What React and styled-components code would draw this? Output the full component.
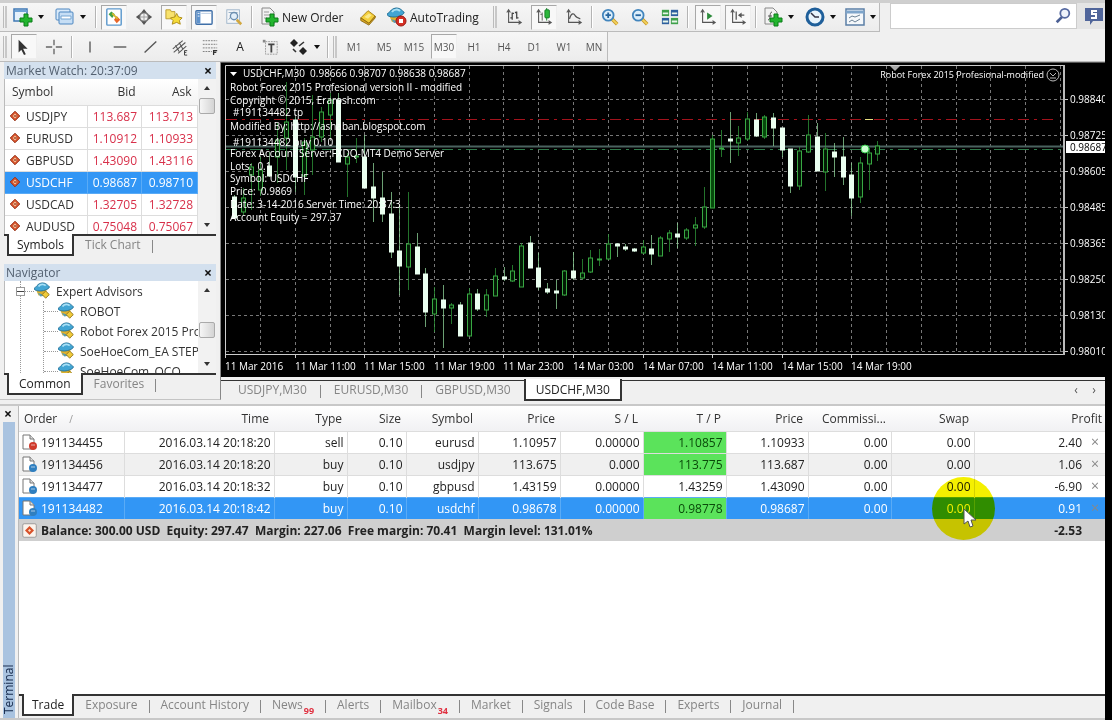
import React from 'react'
import styled, { createGlobalStyle, css } from 'styled-components'

const GlobalStyle = createGlobalStyle`
    * { box-sizing: border-box; }
    body {
        margin: 0;
        background: black;
        font-family: "Open Sans", "Noto Sans", sans-serif;
        font-size: 12px;
        color: #222;
    }
    button, input { font: inherit; color: inherit; }
    svg { display: block; flex: none; }
`

const Page = styled.div`
    display: flex;
    flex-direction: column;
    min-height: 100vh;
    margin-right: 7px;
    background: #f0f0f0;
    overflow: hidden;
`

/* ---------- toolbars ---------- */

const TopBar = styled.div`
    display: flex;
    height: 32px;
    border-top: 3px solid #cfcfcf;
`

const LowBar = styled.div`
    display: flex;
    height: 29px;
`

const Tools = styled.div`
    display: flex;
    align-items: center;
    gap: 4px;
    height: 29px;
    padding-left: 3px;
    border-right: 1px solid #bbb;
    border-bottom: ${p => (p.$line ? '1px solid #bbb' : 'none')};
    background: linear-gradient(#f6f6f6, #ececec);
`

const Handle = styled.span`
    width: 4px;
    height: 22px;
    border-left: 1px solid #bbb;
    border-right: 2px solid #c8c8c8;
`

const Sep = styled.span`
    width: 2px;
    height: 22px;
    margin-right: ${p => p.$after || 0}px;
    border-left: 1px solid #b4b4b4;
    border-right: 1px solid white;
`

const Tool = styled.button`
    display: flex;
    align-items: center;
    justify-content: ${p => (p.$wide ? 'flex-start' : 'center')};
    gap: 3px;
    width: ${p => p.$wide || 26}px;
    height: 25px;
    padding: 0 ${p => (p.$wide ? 1 : 0)}px;
    border: 1px solid transparent;
    background: none;
    white-space: nowrap;
    ${p => p.$on && css`
        background: #f8f8f8;
        border-color: #a8a8a8 #eee #eee #a8a8a8;
    `}
`

const Period = styled(Tool)`
    font-size: 10px;
    color: #555;
`

const Caret = styled.span`
    margin-left: ${p => p.$space}px;
    border: 3px solid transparent;
    border-top: 4px solid #111;
    border-bottom: 0;
`

const Search = styled.label`
    display: flex;
    flex: 1;
    align-items: center;
    height: 26px;
    margin-left: 10px;
    padding-right: 4px;
    border: 1px solid #ccc;
    background: white;
`

const SearchInput = styled.input`
    flex: 1;
    min-width: 0;
    border: 0;
    outline: 0;
    background: none;
`

const Chat = styled.button`
    width: 28px;
    height: 26px;
    padding: 0 0 0 7px;
    border: 0;
    background: #e4e4e4;
`

/* ---------- side panels ---------- */

const Middle = styled.div`
    display: grid;
    grid-template-columns: 221px minmax(0, 1fr);
    border-top: 1px solid #bbb;
`

const Side = styled.div`
    display: flex;
    flex-direction: column;
    gap: 8px;
    padding: 0 4px 4px 4px;
    border-right: 1px solid #888;
    border-bottom: 1px solid #c4c4c4;
    margin-bottom: 4px;
`

const Panel = styled.section`
    display: flex;
    flex-direction: column;
`

const PanelTitle = styled.header`
    display: flex;
    align-items: center;
    justify-content: space-between;
    height: 17px;
    padding-left: 2px;
    background: #d3e0ee;
    color: #536070;
`

const Close = styled.button`
    width: 16px;
    height: 16px;
    padding: 0;
    border: 0;
    background: none;
    color: #111;
    font-size: 14px;
    font-weight: bold;
    line-height: 14px;
`

const PanelBody = styled.div`
    display: grid;
    grid-template-columns: minmax(0, 1fr) 18px;
    height: ${p => p.$height}px;
    overflow: hidden;
    background: white;
    border-left: 1px solid #bbb;
`

const Clip = styled.div`
    min-width: 0;
    overflow: hidden;
`

const ScrollBar = styled.div`
    display: flex;
    flex-direction: column;
    background: #f2f2f2;
`

const ScrollButton = styled.button`
    display: grid;
    place-items: center;
    height: 18px;
    padding: 0;
    border: 0;
    background: none;
`

const Arrow = styled.span`
    border: 3px solid transparent;
    ${p => (p.$up ? 'border-bottom: 4px solid #333; border-top: 0;' : 'border-top: 4px solid #333; border-bottom: 0;')}
`

const Track = styled.div`
    flex: 1;
    padding-top: ${p => p.$top}px;
`

const Thumb = styled.div`
    height: 16px;
    margin: 0 1px;
    border: 1px solid #aaa;
    border-radius: 2px;
    background: linear-gradient(90deg, #f6f6f6, #d4d4d4);
`

const Quotes = styled.table`
    width: 100%;
    table-layout: fixed;
    border-collapse: collapse;

    th {
        height: 26px;
        padding: 0 6px;
        font-weight: normal;
        text-align: right;
        color: #333;
        background: linear-gradient(white, #f3f3f3);
        border-bottom: 1px solid #ddd;
    }
    th:first-child { text-align: left; padding-left: 7px; }
    td {
        height: 22px;
        padding: 0 4px;
        text-align: right;
        color: #d8304a;
        border-right: 1px solid #ddd;
        border-bottom: 1px solid #ddd;
    }
    td:first-child { padding-left: 3px; }
`

const QuoteRow = styled.tr`
    ${p => p.$on && css`
        background: #3296f5;
        && td { color: white; border-color: #5aabf6; }
    `}
`

const SymbolCell = styled.div`
    display: flex;
    align-items: center;
    gap: 5px;
    padding-left: 1px;
    color: ${p => (p.$on ? 'white' : '#333')};
`

const Tabs = styled.nav`
    display: flex;
    align-items: flex-start;
    height: ${p => p.$height || 22}px;
    padding-left: ${p => p.$left || 3}px;
    border-top: 2px solid #333;
    background: #f0f0f0;
`

const Tab = styled.button`
    display: flex;
    justify-content: center;
    height: 22px;
    padding: 0 ${p => p.$pad || 11}px;
    border: 0;
    background: none;
    color: #858585;
    line-height: 18px;
    white-space: nowrap;
    ${p => p.$on && css`
        margin-top: -2px;
        padding: 2px ${p.$pad || 8}px 0;
        border: 2px solid #333;
        border-top: 0;
        background: white;
        color: #222;
    `}
`

const TabLine = styled.span`
    width: 1px;
    height: 13px;
    margin-top: 4px;
    background: #888;
`

const Count = styled.sub`
    align-self: flex-end;
    margin-left: 1px;
    color: #e03040;
    font-size: 9px;
    font-weight: bold;
    line-height: 14px;
`

/* ---------- navigator tree ---------- */

const TreeList = styled.ul`
    margin: 0 0 0 15px;
    padding: 0;
    list-style: none;
    border-left: 1px dotted #999;
    white-space: nowrap;
`

const TreeItem = styled.li`
    display: flex;
    align-items: center;
    gap: 4px;
    height: 20px;
    color: #333;
`

const Branch = styled.ul`
    margin: 0 0 0 22px;
    padding: 0;
    list-style: none;
    border-left: 1px dotted #999;
`

const Dash = styled.span`
    flex: none;
    width: ${p => p.$w}px;
    margin-right: -4px;
    border-top: 1px dotted #999;
`

const Expander = styled.button`
    flex: none;
    width: 9px;
    height: 9px;
    margin: 0 -5px;
    padding: 0;
    border: 1px solid #999;
    background: linear-gradient(white 3px, #444 3px, #444 4px, white 4px);
`

/* ---------- chart ---------- */

const ChartColumn = styled.div`
    display: flex;
    flex-direction: column;
`

const ChartArea = styled.div`
    border-top: 1px solid #555;
    background: black;

    svg { width: 100%; height: auto; }
`

const ChartTabs = styled(Tabs)`
    margin-top: 3px;
    padding-right: 2px;
    border-top: 1px solid #333;
`

const Nudge = styled.button`
    width: 18px;
    height: 18px;
    padding: 0;
    border: 0;
    background: none;
    color: #555;
    line-height: 16px;
    margin-left: ${p => (p.$first ? 'auto' : 0)};
`

/* ---------- terminal ---------- */

const Terminal = styled.section`
    display: grid;
    grid-template-columns: 18px minmax(0, 1fr);
    flex: 1;
    border-top: 2px solid #c8c8c8;
    border-bottom: 2px solid #c8c8c8;
`

const Strip = styled.aside`
    display: flex;
    flex-direction: column;
    padding-right: 3px;
`

const StripName = styled.div`
    flex: 1;
    margin-left: 3px;
    padding-top: 4px;
    writing-mode: vertical-rl;
    transform: rotate(180deg);
    background: #a9c3e0;
    color: #14284a;
    line-height: 12px;
`

const TerminalBody = styled.div`
    display: flex;
    flex-direction: column;
    justify-content: space-between;
    background: white;
    border-left: 1px solid #bbb;
`

const Orders = styled.table`
    width: 100%;
    table-layout: fixed;
    border-collapse: collapse;

    th {
        height: 25px;
        padding: 0 5px;
        font-weight: normal;
        text-align: right;
        color: #333;
        background: linear-gradient(white, #f1f1f3);
        white-space: nowrap;
    }
    th:first-child { text-align: left; }
    th:last-child { padding-right: 3px; }
    td {
        height: 22px;
        padding: 0 3px;
        text-align: right;
        border-right: 1px solid #ddd;
        border-top: 1px solid #ddd;
        white-space: nowrap;
    }
    td:nth-last-child(-n + 2) { border-right: 0; }
`

const OrderRow = styled.tr`
    background: ${p => (p.$alt ? '#f0f0f0' : 'white')};
    ${p => p.$on && css`
        background: #3296f5;
        color: white;
        && td { border-color: #5aabf6; }
    `}
`

const OrderId = styled.div`
    display: flex;
    align-items: center;
    gap: ${p => p.$gap || 2}px;
`

const Target = styled.td`
    background: ${p => (p.$hit ? '#5be35b' : 'transparent')};
    color: ${p => (p.$hit ? '#0a4a0a' : 'inherit')};
`

const SortMark = styled.span`
    margin-left: 12px;
    color: #999;
    font-size: 10px;
`

const SmallClose = styled.button`
    display: block;
    margin: 0 auto;
    padding: 0;
    border: 0;
    background: none;
    color: #888;
    font-size: 14px;
    line-height: 16px;
`

const Summary = styled.tr`
    background: #cfcfcf;
    font-weight: bold;
    && td { border: 0; }
    && td:first-child { text-align: left; padding-left: 3px; }
`

const SwapCell = styled.td`
    position: relative;
`

const Halo = styled.span`
    position: absolute;
    left: 40px;
    top: -21px;
    width: 63px;
    height: 63px;
    border-radius: 50%;
    background: #f4f000;
    mix-blend-mode: multiply;
`

const Pointer = styled.svg`
    position: absolute;
    left: 71px;
    top: 10px;
`

/* ---------- icons ---------- */

const Plus = ({ x, y }) => (
    <path transform={`translate(${x} ${y})`} d="M4 0h4v4h4v4H8v4H4V8H0V4h4z" fill="#22b52e" stroke="#0b7d18" />
)

const Axes = () => <path d="M4 3v13h13M2 5l2-3 2 3M15 14l3 2-3 2" fill="none" stroke="#555" strokeWidth="1.2" />

const Lens = ({ plus }) => (
    <>
        <path d="M12 12l6 6" stroke="#c99a2c" strokeWidth="4" />
        <path d="M12 12l6 6" stroke="#f3d35c" strokeWidth="2" />
        <circle cx="8" cy="8" r="6" fill="#dceefb" stroke="#4285bd" strokeWidth="2" />
        <path d={plus ? 'M5 8h6M8 5v6' : 'M5 8h6'} stroke="#2666a0" strokeWidth="2" />
    </>
)

const Hat = () => (
    <>
        <path d="M2 8l3 7 8-1 1-6z" fill="#dfb22c" />
        <path d="M4 12l3 4 6-1" fill="#5a9cb0" />
        <path d="M0 7c3-1 3-5 9-6 5 0 6 3 8 4 1 2-5 5-10 5-4 0-7-1-7-3z" fill="#42a5d3" stroke="#216f96" />
        <path d="M5 5c2-3 6-3 8-1" stroke="#a8e0f6" strokeWidth="2" fill="none" />
    </>
)

const drawings = {
    newChart: <><rect x="1" y="2" width="13" height="12" fill="#e5f1fb" stroke="#3f78b5" strokeWidth="1.5" /><path d="M2 4h12" stroke="#6da2d6" strokeWidth="2" /><Plus x={7} y={7} /></>,
    windows: <><rect x="1" y="2" width="14" height="11" rx="1" fill="#d9eafa" stroke="#4c86c0" /><rect x="4" y="5" width="14" height="12" rx="1" fill="#c6def5" stroke="#4c86c0" /><path d="M6 9h10v3H6z" fill="white" stroke="#75a5d2" /></>,
    market: <><rect x="2" y="1" width="16" height="18" rx="1" fill="white" stroke="#5c98cc" strokeWidth="1.6" /><path d="M7 4l4 3-3 4-4-4z" fill="#43a047" /><path d="M13 9l4 4-4 4-3-4z" fill="#e8662a" /><path d="M8 6l6 6" stroke="#d6b92f" strokeWidth="2" /></>,
    data: <><circle cx="10" cy="10" r="5" fill="none" stroke="#777" strokeWidth="2" /><path d="M10 1l3 4H7zM10 19l3-4H7zM1 10l4-3v6zM19 10l-4-3v6z" fill="#555" /><path d="M10 6v8M6 10h8" stroke="#999" /></>,
    navigator: <><path d="M1 2h5l1 2h4v8H1z" fill="#f8e26d" stroke="#b9982a" /><path d="M13 6l2 4 4 1-3 3 1 4-4-2-5 2 1-4-3-3 5-1z" fill="#f6dc3a" stroke="#a98814" /></>,
    terminal: <><rect x="1" y="3" width="18" height="15" rx="1" fill="white" stroke="#3f6fa8" strokeWidth="1.6" /><path d="M2 4h4v13H2z" fill="#5f93cd" /><path d="M7 6h11" stroke="#b7cbe2" /><path d="M3 6h2M3 9h2" stroke="white" /></>,
    tester: <><rect x="2" y="2" width="14" height="15" fill="#f4f6f8" stroke="#9cb3c9" /><path d="M4 5h10M4 13l3-4 2 3" stroke="#8ca8c0" fill="none" /><path d="M13 13l5 5" stroke="#d2a73e" strokeWidth="3" /><circle cx="10" cy="9" r="4" fill="#e2effa" stroke="#6d8fb0" strokeWidth="1.5" /></>,
    order: <><path d="M3 1h8l4 4v12H3z" fill="#f2f2f2" stroke="#888" /><path d="M5 5h5M5 8h6M5 11h3" stroke="#999" /><Plus x={7} y={7} /></>,
    book: <><path d="M2 11l8-8 8 6-7 8z" fill="#f4cf3c" stroke="#a47c10" /><path d="M2 11v3l9 5 7-8V9l-7 8z" fill="#d9a520" stroke="#8b680c" /><path d="M6 10l5-4 3 2-4 4z" fill="#fae98c" /></>,
    auto: <><Hat /><circle cx="14" cy="14" r="5" fill="#d42f24" stroke="#9d1710" /><rect x="12" y="12" width="4" height="4" fill="white" /></>,
    bars: <><Axes /><path d="M8 5v8M8 6h2M6 11h2M13 4v8M11 5h2M13 11h2" stroke="#444" strokeWidth="1.4" /></>,
    candles: <><Axes /><path d="M8 5v9M6 7h2" stroke="#555" /><path d="M13 0v14" stroke="#117a22" /><rect x="11" y="2" width="5" height="9" rx="1" fill="#2cb73c" stroke="#117a22" /></>,
    line: <><Axes /><path d="M5 12c2-7 5-6 6-4s3 3 6 4" fill="none" stroke="#555" strokeWidth="1.4" /></>,
    zoomIn: <Lens plus />,
    zoomOut: <Lens />,
    tile: <><rect x="1" y="2" width="8" height="7" fill="#3ea04a" /><rect x="11" y="2" width="8" height="7" fill="#2d5f9e" /><rect x="1" y="11" width="8" height="7" fill="#2d5f9e" /><rect x="11" y="11" width="8" height="7" fill="#3ea04a" /><path d="M2 6h6M12 6h6M2 15h6M12 15h6" stroke="#e8f6ea" strokeWidth="2" /></>,
    scroll: <><Axes /><path d="M9 5l6 4-6 4z" fill="#2b8a3a" /></>,
    shift: <><Axes /><path d="M8 4v9M17 8h-6" stroke="#555" strokeWidth="1.4" /><path d="M10 8l4-3v6z" fill="#555" /></>,
    indicators: <><path d="M2 1h8l4 4v12H2z" fill="#f2f2f2" stroke="#888" /><path d="M5 13c3 0 1-8 4-8M5 9h4" stroke="#555" fill="none" /><Plus x={7} y={7} /></>,
    clock: <><circle cx="10" cy="10" r="8" fill="#e8f4fc" stroke="#1f5f9a" strokeWidth="3" /><path d="M6 6l4 4h4" fill="none" stroke="#334" strokeWidth="1.5" /></>,
    template: <><rect x="1" y="2" width="18" height="16" fill="#f5f8fb" stroke="#5b7fa6" strokeWidth="1.5" /><path d="M1 5h18" stroke="#7ea5cb" strokeWidth="3" /><path d="M4 11l3-2 3 1 5-2M4 15l3-2 3 2 5-3" fill="none" stroke="#6c8296" /></>,
    cursor: <path d="M4 2v14l3-3 3 6 2-1-3-6h5z" fill="#333" />,
    cross: <path d="M10 2v6M10 12v6M1 10h7M12 10h7" stroke="#666" strokeWidth="1.5" />,
    vline: <path d="M10 4v12" stroke="#555" strokeWidth="1.5" />,
    hline: <path d="M3 10h14" stroke="#555" strokeWidth="1.5" />,
    trend: <path d="M4 16L17 4" stroke="#555" strokeWidth="1.5" />,
    channel: <><path d="M2 12L13 3M3 16L16 5M8 17l9-8M5 8l4 7M9 5l4 7" stroke="#555" strokeWidth="1.2" /><path d="M18 14h-3v5h3M15 16h2" stroke="#333" fill="none" /></>,
    fibo: <><path d="M2 3h16M2 7h16M2 11h16M2 15h10" stroke="#777" strokeDasharray="2 1" /><path d="M14 19v-5h4M14 16h3" stroke="#333" fill="none" strokeWidth="1.4" /></>,
    label: <><rect x="5" y="4" width="13" height="14" fill="#eee" stroke="#999" strokeDasharray="2 1" /><path d="M8 7h7M11.500 7v9" stroke="#444" strokeWidth="2" /><path d="M2 2h3v3H2z" fill="#888" /></>,
    arrows: <><path d="M5 2l4 4-4 4-4-4zM14 10l4 4-4 4-4-4z" fill="#222" /><path d="M4 12l3 3M10 9l5-4" stroke="#333" strokeWidth="1.6" fill="none" /></>,
    find: <><path d="M3 17l6-6" stroke="#4a5f94" strokeWidth="3" /><circle cx="12" cy="7" r="5" fill="#eef3fb" stroke="#5468a0" strokeWidth="2" /></>,
    expert: <><Hat /><path d="M13 10l4 4-4 4-4-4z" fill="#f0cb3a" stroke="#8e7017" /></>,
    diamond: <><path d="M10 2l8 8-8 8-8-8z" fill="#d8512a" stroke="#8f2d12" strokeWidth="1.5" /><path d="M10 6l4 4-4 4-4-4z" fill="#f7c9a0" /><path d="M8 10h5" stroke="#8f2d12" strokeWidth="2" /></>,
    balance: <><rect x="1" y="1" width="18" height="18" rx="2" fill="#fbf3ec" stroke="#888" /><path d="M10 4l6 6-6 6-6-6z" fill="#d8512a" /><path d="M10 8l2 2-2 2-2-2z" fill="#fbe0c4" /></>,
}

const Icon = ({ name, size = 18 }) => (
    <svg width={size} height={size} viewBox="0 0 20 20" aria-hidden="true">{drawings[name]}</svg>
)

const Paper = ({ color }) => (
    <svg width="17" height="17" viewBox="0 0 17 17" aria-hidden="true">
        <path d="M1 1h7l4 4v10H1z" fill="white" stroke="#777" />
        <path d="M8 1v4h4" fill="#ddd" stroke="#777" />
        <circle cx="11" cy="12" r="4" fill={color} />
        <path d="M9 11h4" stroke="white" strokeOpacity="0.6" />
    </svg>
)

/* ---------- data ---------- */

const quotes = [
    ['USDJPY', '113.687', '113.713'],
    ['EURUSD', '1.10912', '1.10933'],
    ['GBPUSD', '1.43090', '1.43116'],
    ['USDCHF', '0.98687', '0.98710'],
    ['USDCAD', '1.32705', '1.32728'],
    ['AUDUSD', '0.75048', '0.75067'],
]

const experts = ['ROBOT', 'Robot Forex 2015 Profesional', 'SoeHoeCom_EA STEP', 'SoeHoeCom_OCO']

const orders = [
    ['191134455', '2016.03.14 20:18:20', 'sell', '0.10', 'eurusd', '1.10957', '0.00000', '1.10857', '1.10933', '0.00', '0.00', '2.40'],
    ['191134456', '2016.03.14 20:18:20', 'buy', '0.10', 'usdjpy', '113.675', '0.000', '113.775', '113.687', '0.00', '0.00', '1.06'],
    ['191134477', '2016.03.14 20:18:32', 'buy', '0.10', 'gbpusd', '1.43159', '0.00000', '1.43259', '1.43090', '0.00', '0.00', '-6.90'],
    ['191134482', '2016.03.14 20:18:42', 'buy', '0.10', 'usdchf', '0.98678', '0.00000', '0.98778', '0.98687', '0.00', '0.00', '0.91'],
]

const headings = ['Time', 'Type', 'Size', 'Symbol', 'Price', 'S / L', 'T / P', 'Price', 'Commissi...', 'Swap']
const columns = [105, 150, 73, 59, 72, 82, 83, 83, 82, 83, 83]

// kind, high, body top, body bottom, low. w = bear, g = bull, f = filled bull
const candles = [
    ['w', 195, 197, 218, 218], ['g', 188, 198, 212, 215], ['g', 163, 167, 175, 210], ['g', 157, 170, 190, 196],
    ['w', 152, 166, 176, 177], ['g', 123, 140, 157, 183], ['g', 82, 122, 138, 170], ['w', 117, 120, 177, 192],
    ['g', 138, 142, 176, 195], ['g', 95, 137, 150, 175], ['g', 107, 112, 137, 142], ['g', 93, 100, 115, 138],
    ['w', 93, 100, 162, 162], ['g', 153, 157, 164, 197], ['g', 138, 156, 157, 163], ['w', 135, 157, 188, 188],
    ['w', 163, 187, 198, 222], ['w', 172, 198, 214, 222], ['w', 192, 214, 252, 258], ['w', 205, 251, 266, 295],
    ['g', 192, 244, 267, 290], ['w', 233, 247, 274, 274], ['w', 268, 274, 312, 327], ['g', 287, 299, 314, 332],
    ['w', 285, 300, 308, 348], ['g', 303, 305, 308, 324], ['w', 302, 305, 336, 336], ['g', 288, 294, 336, 336],
    ['w', 289, 294, 309, 311], ['g', 289, 295, 310, 317], ['g', 268, 276, 296, 296], ['w', 267, 277, 279, 281],
    ['g', 265, 271, 281, 282], ['g', 243, 246, 287, 287], ['w', 236, 243, 268, 268], ['w', 253, 268, 287, 290],
    ['w', 283, 289, 292, 294], ['w', 280, 291, 293, 309], ['g', 270, 271, 295, 296], ['w', 252, 271, 278, 280],
    ['g', 259, 273, 278, 280], ['g', 250, 258, 272, 273], ['g', 249, 259, 260, 266], ['g', 234, 244, 259, 260],
    ['w', 243, 244, 246, 257], ['w', 244, 247, 249, 251], ['w', 248, 249, 251, 252], ['g', 240, 247, 253, 254],
    ['w', 235, 249, 254, 265], ['g', 236, 238, 256, 256], ['g', 230, 233, 239, 252], ['w', 223, 234, 237, 248],
    ['g', 228, 230, 238, 240], ['g', 217, 225, 228, 246], ['g', 187, 207, 227, 229], ['f', 135, 139, 208, 208],
    ['g', 130, 148, 149, 157], ['w', 112, 139, 141, 163], ['g', 126, 138, 143, 156], ['g', 112, 119, 139, 141],
    ['w', 113, 120, 136, 137], ['f', 115, 117, 137, 139], ['w', 113, 118, 128, 146], ['w', 128, 128, 150, 157],
    ['w', 149, 149, 186, 193], ['g', 147, 151, 186, 190], ['g', 115, 135, 152, 153], ['w', 123, 137, 171, 171],
    ['g', 133, 149, 172, 191], ['w', 143, 152, 157, 177], ['w', 137, 157, 177, 185], ['w', 163, 175, 198, 216],
    ['g', 157, 163, 197, 203], ['g', 148, 153, 164, 190], ['g', 141, 146, 154, 161],
]

const comments = [
    [243, 77, 'USDCHF,M30  0.98666 0.98707 0.98638 0.98687'],
    [230, 91, 'Robot Forex 2015 Profesional version II - modified'],
    [230, 104, 'Copyright © 2015, Erarosh.com'],
    [233, 116, '#191134482 tp'],
    [230, 130, 'Modified By: http://ashaban.blogspot.com'],
    [233, 146, '#191134482 buy 0.10'],
    [230, 157, 'Forex Account Server:FXDQ-MT4 Demo Server'],
    [230, 170, 'Lots:  0.1'],
    [230, 182, 'Symbol: USDCHF'],
    [230, 195, 'Price:  0.9869'],
    [230, 208, 'Date: 3-14-2016 Server Time: 20:37:3'],
    [230, 221, 'Account Equity = 297.37'],
]

const prices = ['0.98840', '0.98725', '0.98605', '0.98485', '0.98365', '0.98250', '0.98130', '0.98010']
const times = ['11 Mar 2016', '11 Mar 11:00', '11 Mar 15:00', '11 Mar 19:00', '11 Mar 23:00', '14 Mar 03:00', '14 Mar 07:00', '14 Mar 11:00', '14 Mar 15:00', '14 Mar 19:00']

function Candle({ index, kind, high, top, bottom, low }) {
    const x = Math.round(234 + index * 8.695)
    const stroke = kind === 'w' ? '#8fd69a' : '#2f9a3a'
    const fill = { w: '#eafff0', g: '#021a04', f: '#064a0c' }[kind]
    return (
        <g>
            <path d={`M${x + 0.5} ${high}V${low}`} stroke={stroke} strokeOpacity="0.75" />
            <rect x={x - 1.5} y={top} width="4" height={Math.max(bottom - top, 1)} fill={fill} stroke={kind === 'w' ? '#eafff0' : '#38a843'} />
        </g>
    )
}

function Chart() {
    return (
        <svg viewBox="221 63 884 314" fontSize="10" fill="white" role="img" aria-label="USDCHF M30 chart">
            <g stroke="#777" strokeDasharray="3 3">
                {Array.from({ length: 24 }, (_, i) => Math.round(260 + i * 34.78) + 0.5).map(x => (
                    <path key={x} d={`M${x} 66V354`} />
                ))}
                {prices.map((p, i) => <path key={p} d={`M226 ${99.5 + i * 36}H1063`} />)}
            </g>
            <path d="M226 119.500H1057" stroke="#a3121c" strokeDasharray="11 5 3 5" />
            <path d="M226 146.500H1063" stroke="#4a625f" strokeWidth="2" />
            <path d="M226 149.500H1063" stroke="#2f7a4a" strokeDasharray="11 5 3 5" />
            {candles.map(([kind, high, top, bottom, low], i) => (
                <Candle key={i} index={i} kind={kind} high={high} top={top} bottom={bottom} low={low} />
            ))}
            <circle cx="865" cy="149" r="4" fill="#c9ffd0" stroke="#32c848" />
            <path d="M865 119.500h8" stroke="#e8e080" />
            <path d="M225.500 355V65.500H1064M225 354.500H1064" stroke="#ccc" fill="none" />
            <path d="M1064 65V355" stroke="#bbb" strokeWidth="2" />
            <path d="M890 66h10l-5 5z" fill="#aaa" />
            <path d="M230 72h7l-3.500 4z" />
            {comments.map(([x, y, text]) => (
                <text key={y} x={x} y={y} xmlSpace="preserve">{text}</text>
            ))}
            <text x="1044" y="78" fontSize="9" textAnchor="end">Robot Forex 2015 Profesional-modified</text>
            <circle cx="1053" cy="75" r="6" fill="none" stroke="#bbb" />
            <path d="M1050 73l3 3 3-3M1050 78h6" stroke="#bbb" fill="none" />
            {prices.map((p, i) => (
                <g key={p}>
                    <path d={`M1065 ${99.5 + i * 36}h3`} stroke="#ccc" />
                    <text x="1070" y={103 + i * 36}>{p}</text>
                </g>
            ))}
            <rect x="1066" y="141" width="39" height="12" />
            <text x="1070" y="151" fill="black">0.98687</text>
            {times.map((t, i) => (
                <g key={t}>
                    <path d={`M${Math.round(225 + i * 69.6) + 0.5} 354v4`} stroke="#ccc" />
                    <text x={Math.round(225 + i * 69.6)} y="370">{t}</text>
                </g>
            ))}
        </svg>
    )
}

const IconTool = ({ name, on }) => <Tool $on={on} aria-label={name}><Icon name={name} /></Tool>
const MenuTool = ({ name, width = 38, space = 2 }) => (
    <Tool $wide={width} aria-label={name}><Icon name={name} size={20} /><Caret $space={space} /></Tool>
)

function Toolbars() {
    return (
        <>
            <TopBar>
                <Tools $line>
                    <Handle />
                    <MenuTool name="newChart" />
                    <MenuTool name="windows" />
                    <Sep />
                    <IconTool name="market" on />
                    <IconTool name="data" />
                    <IconTool name="navigator" on />
                    <IconTool name="terminal" on />
                    <IconTool name="tester" />
                    <Sep />
                    <Tool $wide={94}><Icon name="order" size={20} />New Order</Tool>
                    <IconTool name="book" />
                    <Tool $wide={104}><Icon name="auto" size={20} />AutoTrading</Tool>
                    <Handle />
                    <IconTool name="bars" />
                    <IconTool name="candles" on />
                    <IconTool name="line" />
                    <Sep />
                    <IconTool name="zoomIn" />
                    <IconTool name="zoomOut" />
                    <IconTool name="tile" />
                    <Sep $after={2} />
                    <IconTool name="scroll" on />
                    <IconTool name="shift" on />
                    <Sep />
                    <MenuTool name="indicators" />
                    <MenuTool name="clock" width={36} />
                    <MenuTool name="template" width={36} />
                </Tools>
                <Search>
                    <SearchInput type="search" aria-label="Search" />
                    <Icon name="find" />
                </Search>
                <Chat aria-label="Chat">
                    <svg width="20" height="20" viewBox="0 0 20 20">
                        <path d="M1 2h18v13H9l-3 4v-4H1z" fill="#50659a" />
                        <path d="M13 5H8v3h4v4H7" fill="none" stroke="white" strokeWidth="2" />
                    </svg>
                </Chat>
            </TopBar>
            <LowBar>
                <Tools>
                    <Handle />
                    <IconTool name="cursor" on />
                    <IconTool name="cross" />
                    <Sep />
                    <IconTool name="vline" />
                    <IconTool name="hline" />
                    <IconTool name="trend" />
                    <IconTool name="channel" />
                    <IconTool name="fibo" />
                    <Tool>A</Tool>
                    <IconTool name="label" />
                    <MenuTool name="arrows" width={36} />
                    <Sep />
                    <Handle />
                    {['M1', 'M5', 'M15', 'M30', 'H1', 'H4', 'D1', 'W1', 'MN'].map(p => (
                        <Period key={p} $on={p === 'M30'}>{p}</Period>
                    ))}
                </Tools>
            </LowBar>
        </>
    )
}

const Scroll = ({ top }) => (
    <ScrollBar>
        <ScrollButton aria-label="Scroll up"><Arrow $up /></ScrollButton>
        <Track $top={top}><Thumb /></Track>
        <ScrollButton aria-label="Scroll down"><Arrow /></ScrollButton>
    </ScrollBar>
)

function MarketWatch() {
    return (
        <Panel>
            <PanelTitle>Market Watch: 20:37:09<Close aria-label="Close Market Watch">×</Close></PanelTitle>
            <PanelBody $height={155}>
                <Clip>
                    <Quotes>
                        <colgroup><col /><col width="54" /><col width="56" /></colgroup>
                        <thead><tr><th>Symbol</th><th>Bid</th><th>Ask</th></tr></thead>
                        <tbody>
                            {quotes.map(([symbol, bid, ask]) => (
                                <QuoteRow key={symbol} $on={symbol === 'USDCHF'}>
                                    <td><SymbolCell $on={symbol === 'USDCHF'}><Icon name="diamond" size={12} />{symbol}</SymbolCell></td>
                                    <td>{bid}</td>
                                    <td>{ask}</td>
                                </QuoteRow>
                            ))}
                        </tbody>
                    </Quotes>
                </Clip>
                <Scroll top={1} />
            </PanelBody>
            <Tabs>
                <Tab $on>Symbols</Tab>
                <Tab>Tick Chart</Tab>
                <TabLine />
            </Tabs>
        </Panel>
    )
}

function Navigator() {
    return (
        <Panel>
            <PanelTitle>Navigator<Close aria-label="Close Navigator">×</Close></PanelTitle>
            <PanelBody $height={92}>
                <Clip>
                    <TreeList>
                        <TreeItem><Expander aria-label="Collapse" /><Dash $w={10} /><Icon name="expert" />Expert Advisors</TreeItem>
                        <Branch>
                            {experts.map(name => (
                                <TreeItem key={name}><Dash $w={14} /><Icon name="expert" />{name}</TreeItem>
                            ))}
                        </Branch>
                    </TreeList>
                </Clip>
                <Scroll top={23} />
            </PanelBody>
            <Tabs>
                <Tab $on $pad={10}>Common</Tab>
                <Tab>Favorites</Tab>
                <TabLine />
            </Tabs>
        </Panel>
    )
}

function TradeTable() {
    return (
        <Orders>
            <colgroup>
                {columns.map((w, i) => <col key={i} width={w} />)}
                <col />
                <col width="20" />
            </colgroup>
            <thead>
                <tr>
                    <th>Order<SortMark>/</SortMark></th>
                    {headings.map((h, i) => <th key={i}>{h}</th>)}
                    <th colSpan={2}>Profit</th>
                </tr>
            </thead>
            <tbody>
                {orders.map(([id, time, type, size, symbol, open, sl, tp, price, commission, swap, profit], i) => (
                    <OrderRow key={id} $alt={i === 1} $on={i === 3}>
                        <td><OrderId><Paper color={type === 'sell' ? '#d03a2c' : '#2f7fc0'} />{id}</OrderId></td>
                        <td>{time}</td>
                        <td>{type}</td>
                        <td>{size}</td>
                        <td>{symbol}</td>
                        <td>{open}</td>
                        <td>{sl}</td>
                        <Target $hit={i !== 2}>{tp}</Target>
                        <td>{price}</td>
                        <td>{commission}</td>
                        <SwapCell>
                            {swap}
                            {i === 3 && (
                                <>
                                    <Halo />
                                    <Pointer width="14" height="20" viewBox="0 0 14 20">
                                        <path d="M1 1v15l4-3 2 6 3-1-2-6h5z" fill="white" stroke="#555" />
                                    </Pointer>
                                </>
                            )}
                        </SwapCell>
                        <td>{profit}</td>
                        <td><SmallClose aria-label={`Close order ${id}`}>×</SmallClose></td>
                    </OrderRow>
                ))}
                <Summary>
                    <td colSpan={11}>
                        <OrderId $gap={4}>
                            <Icon name="balance" size={15} />
                            <span>Balance: 300.00 USD&nbsp; Equity: 297.47&nbsp; Margin: 227.06&nbsp; Free margin: 70.41&nbsp; Margin level: 131.01%</span>
                        </OrderId>
                    </td>
                    <td>-2.53</td>
                    <td />
                </Summary>
            </tbody>
        </Orders>
    )
}

const terminalTabs = [['Exposure'], ['Account History'], ['News', 99], ['Alerts'], ['Mailbox', 34], ['Market'], ['Signals'], ['Code Base'], ['Experts'], ['Journal']]

export default function App() {
    return (
        <>
            <GlobalStyle />
            <Page>
                <Toolbars />
                <Middle>
                    <Side>
                        <MarketWatch />
                        <Navigator />
                    </Side>
                    <ChartColumn>
                        <ChartArea><Chart /></ChartArea>
                        <ChartTabs $left={4} $height={24}>
                            {['USDJPY,M30', 'EURUSD,M30', 'GBPUSD,M30'].map((name, i) => (
                                <React.Fragment key={name}>
                                    {i > 0 && <TabLine />}
                                    <Tab $pad={13}>{name}</Tab>
                                </React.Fragment>
                            ))}
                            <Tab $on $pad={10}>USDCHF,M30</Tab>
                            <Nudge $first aria-label="Previous chart">‹</Nudge>
                            <Nudge aria-label="Next chart">›</Nudge>
                        </ChartTabs>
                    </ChartColumn>
                </Middle>
                <Terminal>
                    <Strip>
                        <Close aria-label="Close Terminal">×</Close>
                        <StripName>Terminal</StripName>
                    </Strip>
                    <TerminalBody>
                        <TradeTable />
                        <Tabs $height={24}>
                            <Tab $on>Trade</Tab>
                            {terminalTabs.map(([name, count]) => (
                                <React.Fragment key={name}>
                                    <Tab>{name}{count && <Count>{count}</Count>}</Tab>
                                    <TabLine />
                                </React.Fragment>
                            ))}
                        </Tabs>
                    </TerminalBody>
                </Terminal>
            </Page>
        </>
    )
}
